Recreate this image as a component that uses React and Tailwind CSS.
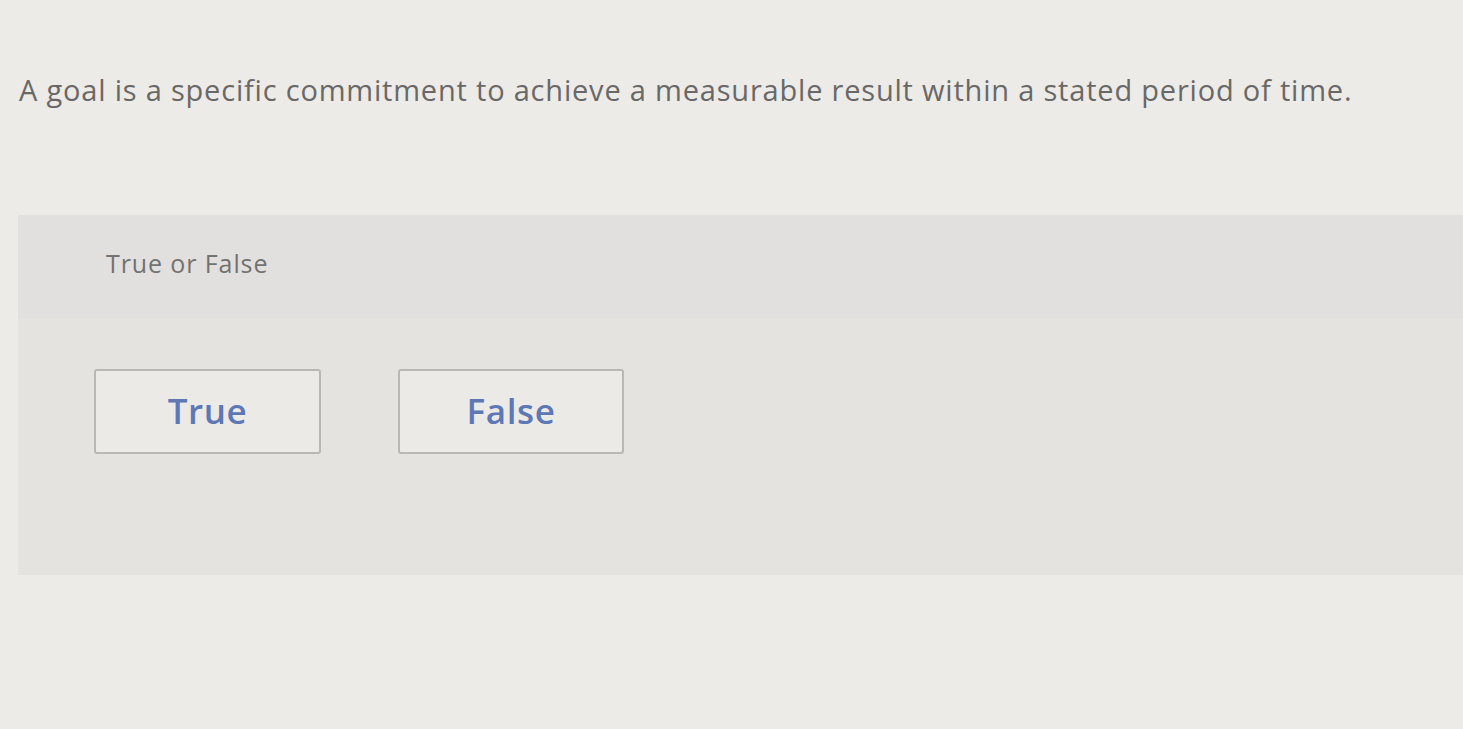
export default function App() {
  return (
    <div className="w-[1463px] h-[729px] overflow-hidden bg-[#ecebe8] text-[#6a6867]" style={{ fontFamily: '"Open Sans", Lato, sans-serif' }}>
      <div className="pt-[70px] pl-[19px] text-[29px] leading-[40px] tracking-[0.8px]">
        A goal is a specific commitment to achieve a measurable result within a stated period of time.
      </div>
      <div className="mt-[105px] ml-[18px] bg-[#e4e3e0] h-[360px]">
        <div className="h-[103px] bg-[#e1e0de] pl-[88px] pt-[31px] text-[25px] leading-[34px] tracking-[0.9px] text-[#747271]">
          True or False
        </div>
        <div className="flex gap-[77px] pl-[76px] pt-[51px]">
          <div className="w-[227px] h-[85px] border-2 border-[#b9b8b6] rounded-[3px] bg-[#eceae7] flex items-center justify-center text-[35px] font-semibold tracking-[0.6px] text-[#5d78b5]">
            True
          </div>
          <div className="w-[226px] h-[85px] border-2 border-[#b9b8b6] rounded-[3px] bg-[#eceae7] flex items-center justify-center text-[35px] font-semibold tracking-[0.6px] text-[#5d78b5]">
            False
          </div>
        </div>
      </div>
    </div>
  );
}
